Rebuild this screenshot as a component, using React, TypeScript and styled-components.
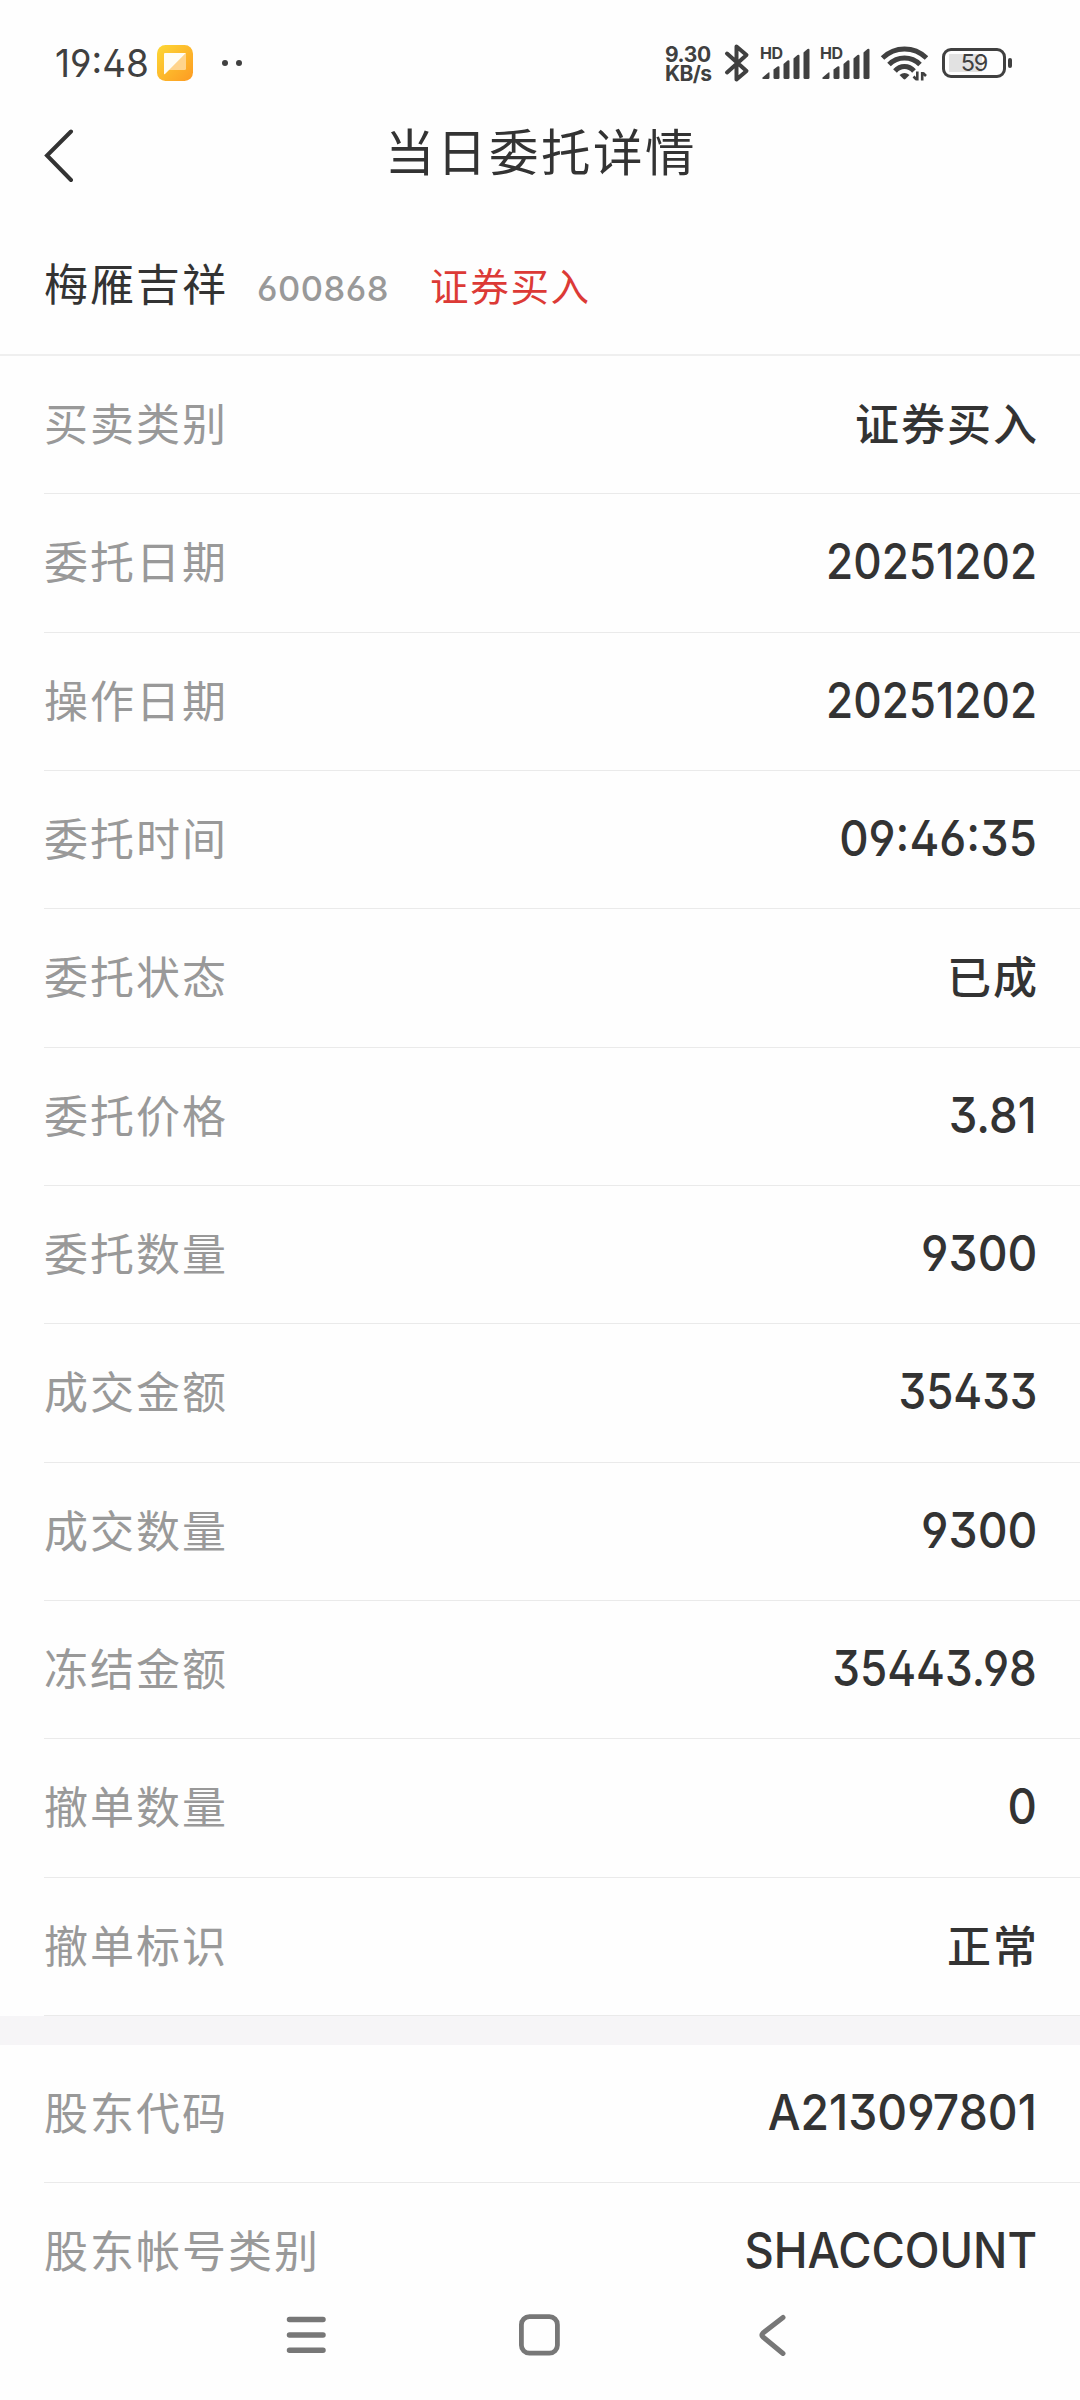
import React from 'react';
import styled, { createGlobalStyle } from 'styled-components';

const GlobalStyle = createGlobalStyle`
  * { box-sizing: border-box; }
  body { margin: 0; background: #fefefe; }
`;

const cjk = '"Noto Sans CJK SC", sans-serif';
const latin = 'Inter, "Noto Sans CJK SC", sans-serif';

const Screen = styled.main`
  width: 1080px;
  height: 2400px;
  overflow: hidden;
  position: relative;
  display: flex;
  flex-direction: column;
  background: #fefefe;
  color: #333;
  font-family: ${cjk};
`;

const StatusBar = styled.header`
  height: 110px;
  flex: none;
  padding: 16px 68px 0 55px;
  display: flex;
  align-items: center;
  justify-content: space-between;
  color: #404040;
  font-family: ${latin};
`;

const StatusGroup = styled.div`
  display: flex;
  align-items: center;
`;

const Clock = styled.span`
  width: 102px;
  font-size: 38.5px;
  line-height: 44px;
  font-feature-settings: 'ss01', 'cv09';
  white-space: nowrap;
`;

const ClockText = styled.span`
  display: inline-block;
  transform: scaleX(0.96);
  transform-origin: left center;
`;

const MoreDots = styled.div`
  display: flex;
  gap: 8px;
  margin-left: 29px;
`;

const Dot = styled.i`
  width: 6px;
  height: 6px;
  border-radius: 50%;
  background: #404040;
`;

const NetSpeed = styled.div`
  width: 59px;
  padding-top: 3px;
  display: flex;
  flex-direction: column;
  font-weight: 700;
  font-size: 21px;
  line-height: 18.5px;
  white-space: nowrap;
`;

const SpeedLine = styled.span<{ $spacing: number }>`
  letter-spacing: ${(p) => p.$spacing}px;
`;

const Signal = styled.div`
  position: relative;
  width: 51px;
  height: 34px;
  margin-right: 9px;
`;

const HdTag = styled.span`
  position: absolute;
  left: 0;
  top: -1px;
  font-size: 16px;
  line-height: 16px;
  font-weight: 700;
  letter-spacing: -0.4px;
`;

const Battery = styled.div`
  position: relative;
  width: 64px;
  height: 30px;
  border: 3px solid #404040;
  border-radius: 9px;
  display: flex;
  align-items: center;
  justify-content: center;
  font-size: 23.5px;
  line-height: 24px;
  letter-spacing: -1.2px;
  background: linear-gradient(#e2e2e2, #e2e2e2) 4px 3px / 33px 18px no-repeat;
`;

const BatteryTip = styled.i`
  width: 4px;
  height: 10px;
  margin-left: 2px;
  border-radius: 2px;
  background: #404040;
`;

const Spacer = styled.i<{ $w: number }>`
  width: ${(p) => p.$w}px;
`;

const TitleBar = styled.div`
  height: 110px;
  flex: none;
  display: grid;
  grid-template-columns: 120px 1fr 120px;
  align-items: start;
`;

const BackButton = styled.button`
  border: 0;
  padding: 19px 0 0 44px;
  background: none;
  line-height: 0;
  text-align: left;
`;

const Title = styled.h1`
  margin: 0;
  padding: 4px 0 0 2px;
  text-align: center;
  font-size: 49.5px;
  line-height: 72px;
  font-weight: 400;
  letter-spacing: 2.5px;
`;

const StockHeader = styled.section`
  height: 136px;
  flex: none;
  padding: 30px 44px 0;
  display: flex;
  align-items: baseline;
  border-bottom: 2px solid #efefef;
`;

const StockName = styled.span`
  font-size: 44px;
  line-height: 64px;
  letter-spacing: 2px;
`;

const StockCode = styled.span`
  margin-left: 29px;
  width: 173px;
  font-family: ${latin};
  font-feature-settings: 'ss01';
  font-size: 34.5px;
  font-weight: 500;
  letter-spacing: 0.5px;
  color: #999;
`;

const Side = styled.span`
  font-size: 38.5px;
  letter-spacing: 1.7px;
  color: #dc3a36;
`;

const List = styled.section`
  flex: none;
  display: flex;
  flex-direction: column;
`;

const Row = styled.div`
  height: 138.33px;
  flex: none;
  margin-left: 44px;
  padding: 0 43px 5px 0;
  display: flex;
  align-items: center;
  justify-content: space-between;
  border-bottom: 1px solid #eaeaea;
`;

const Label = styled.span`
  font-size: 44px;
  line-height: 64px;
  letter-spacing: 2px;
  color: #999;
`;

const HanValue = styled.span`
  margin-right: -2px;
  font-size: 44px;
  line-height: 64px;
  font-weight: 500;
  letter-spacing: 2px;
`;

const LatinValue = styled.span<{ $stretch: number }>`
  padding-top: 2px;
  font-family: ${latin};
  font-size: 49.5px;
  line-height: 64px;
  font-weight: 500;
  font-feature-settings: 'ss01', 'cv09';
  transform: scaleX(${(p) => p.$stretch});
  transform-origin: right center;
`;

const Band = styled.div`
  height: 29px;
  flex: none;
  background: #f6f5f7;
`;

const NavBar = styled.nav`
  position: absolute;
  left: 0;
  right: 0;
  bottom: 0;
  height: 120px;
  padding: 0 0 10px 285px;
  display: grid;
  grid-template-columns: 233px 240px 1fr;
  align-items: center;
  background: #fefefe;
`;

type Entry = { label: string; value: string; stretch?: number };

const orderRows: Entry[] = [
  { label: '买卖类别', value: '证券买入' },
  { label: '委托日期', value: '20251202', stretch: 0.89 },
  { label: '操作日期', value: '20251202', stretch: 0.89 },
  { label: '委托时间', value: '09:46:35', stretch: 0.92 },
  { label: '委托状态', value: '已成' },
  { label: '委托价格', value: '3.81', stretch: 0.92 },
  { label: '委托数量', value: '9300', stretch: 0.935 },
  { label: '成交金额', value: '35433', stretch: 0.888 },
  { label: '成交数量', value: '9300', stretch: 0.935 },
  { label: '冻结金额', value: '35443.98', stretch: 0.89 },
  { label: '撤单数量', value: '0', stretch: 0.92 },
  { label: '撤单标识', value: '正常' },
];

const accountRows: Entry[] = [
  { label: '股东代码', value: 'A213097801', stretch: 0.935 },
  { label: '股东帐号类别', value: 'SHACCOUNT', stretch: 0.917 },
];

function Rows({ items }: { items: Entry[] }) {
  return (
    <List>
      {items.map(({ label, value, stretch }) => (
        <Row key={label}>
          <Label>{label}</Label>
          {stretch ? <LatinValue $stretch={stretch}>{value}</LatinValue> : <HanValue>{value}</HanValue>}
        </Row>
      ))}
    </List>
  );
}

function NoteIcon() {
  return (
    <svg width="36" height="36" viewBox="0 0 36 36">
      <defs>
        <linearGradient id="note" x1="0" y1="0" x2="1" y2="1">
          <stop offset="0" stopColor="#fdd835" />
          <stop offset="1" stopColor="#fd9a22" />
        </linearGradient>
      </defs>
      <rect width="36" height="36" rx="8.5" fill="url(#note)" />
      <path d="M29 8v15.500q0 1.500-1.500 1.500H11.500z" fill="#ffd48c" />
      <path d="M7 9q0-1 1-1H29L8 29q-1 .6-1-.6z" fill="#fffdf5" />
    </svg>
  );
}

function BluetoothIcon() {
  return (
    <svg width="26" height="40" viewBox="0 0 26 40" fill="none" stroke="#404040" strokeWidth="4" strokeLinecap="round" strokeLinejoin="round">
      <path d="M3 10.500 22.500 28 12.500 36.500V3.500L22.500 12 3 29.500" />
    </svg>
  );
}

function SignalIcon() {
  return (
    <Signal>
      <HdTag>HD</HdTag>
      <svg width="51" height="34" viewBox="0 0 51 34" fill="#404040">
        <path d="M2.500 31.500 8.500 26.500q1-.7 1 .5V31.500q0 1.500-1.500 1.500H3.500q-1.800 0-1-1.500z" />
        <path d="M13.500 23.500 17.500 20.500q2-1 2 1V31.500q0 1.500-1.500 1.500H15q-1.500 0-1.500-1.500z" />
        <path d="M23.500 18 27.500 14.500q2-1 2 1V31.500q0 1.500-1.500 1.500H25q-1.500 0-1.500-1.500z" />
        <path d="M33.500 12.500 37.500 9q2-1 2 1V31.500q0 1.500-1.500 1.500H35q-1.500 0-1.500-1.500z" />
        <path d="M43.500 6.500 47.500 3q2-1 2 1V31.500q0 1.500-1.500 1.500H45q-1.500 0-1.500-1.500z" />
      </svg>
    </Signal>
  );
}

function WifiIcon() {
  return (
    <svg width="48" height="36" viewBox="0 0 48 36" fill="none" stroke="#404040" strokeWidth="5">
      <path d="M2.500 13Q12 4 24.500 4T46.500 13" />
      <path d="M9 19.500Q15.500 13 24.500 13T40 19.500" />
      <path d="M15 26Q19 21.500 24.500 21.500T34 26" />
      <path d="M19.500 30q5-4 10 0l-4 4q-1 .8-2 0z" fill="#404040" stroke="none" />
      <path d="M37.300 26.500V35.500M33.500 31.500l3 3M42.200 35.500V27M43 28l3 3" strokeWidth="2.600" />
    </svg>
  );
}

export default function App() {
  return (
    <Screen>
      <GlobalStyle />
      <StatusBar>
        <StatusGroup>
          <Clock>
            <ClockText>19:48</ClockText>
          </Clock>
          <NoteIcon />
          <MoreDots>
            <Dot />
            <Dot />
          </MoreDots>
        </StatusGroup>
        <StatusGroup>
          <NetSpeed>
            <SpeedLine $spacing={-0.4}>9.30</SpeedLine>
            <SpeedLine $spacing={-0.6}>KB/s</SpeedLine>
          </NetSpeed>
          <BluetoothIcon />
          <Spacer $w={10} />
          <SignalIcon />
          <SignalIcon />
          <WifiIcon />
          <Spacer $w={14} />
          <Battery>59</Battery>
          <BatteryTip />
        </StatusGroup>
      </StatusBar>
      <TitleBar>
        <BackButton aria-label="返回">
          <svg width="30" height="54" viewBox="0 0 30 54" fill="none" stroke="#333" strokeWidth="4" strokeLinecap="round">
            <path d="M27 2.500 3 26.500 27 51" />
          </svg>
        </BackButton>
        <Title>当日委托详情</Title>
      </TitleBar>
      <StockHeader>
        <StockName>梅雁吉祥</StockName>
        <StockCode>600868</StockCode>
        <Side>证券买入</Side>
      </StockHeader>
      <Rows items={orderRows} />
      <Band />
      <Rows items={accountRows} />
      <NavBar>
        <svg width="42" height="42" viewBox="0 0 42 42" fill="none" stroke="#777" strokeWidth="5.500" strokeLinecap="round">
          <path d="M4.500 5.500H38M4.500 21H38M4.500 36.300H38" />
        </svg>
        <svg width="42" height="42" viewBox="0 0 42 42" fill="none" stroke="#777" strokeWidth="4.800">
          <rect x="3.400" y="2.700" width="36" height="36.500" rx="8" />
        </svg>
        <svg width="30" height="42" viewBox="0 0 30 42" fill="none" stroke="#777" strokeWidth="5" strokeLinecap="round" strokeLinejoin="round">
          <path d="M25 3.500 5 19Q3 21 5 23L25 39.500" />
        </svg>
      </NavBar>
    </Screen>
  );
}
